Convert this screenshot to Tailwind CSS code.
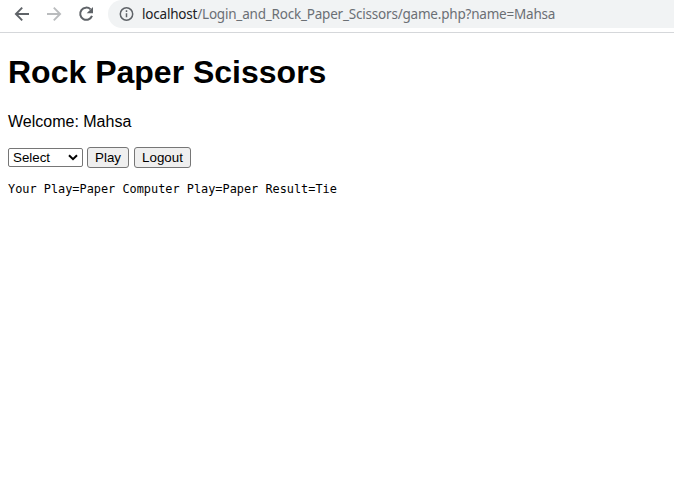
<!DOCTYPE html>
<html lang="en">
<head>
<meta charset="utf-8">
<title>Rock Paper Scissors</title>
<script src="https://cdn.jsdelivr.net/npm/@tailwindcss/browser@4"></script>
</head>
<body class="h-[477px] overflow-hidden bg-white text-black font-['Liberation_Sans',Arial,sans-serif]">
<header class="flex h-[33px] items-start border-b border-[#d5d7da] bg-white">
  <nav class="flex h-7 items-center gap-4 pl-[14px] text-[#5f6368]">
    <svg class="size-4" viewBox="0 0 16 16" fill="none" stroke="currentColor" stroke-width="1.9"><path d="M15 8H2.5M8.2 1.7 1.9 8l6.3 6.3"/></svg>
    <svg class="size-4 text-[#babcbe]" viewBox="0 0 16 16" fill="none" stroke="currentColor" stroke-width="1.9"><path d="M1 8h12.500M7.800 1.700 14.100 8l-6.300 6.300"/></svg>
    <svg class="size-4" viewBox="0 0 16 16"><path d="M12.600 3.400A6.100 6.100 0 1 0 14 9.900" fill="none" stroke="currentColor" stroke-width="2"/><path d="M15 1v6.300H8.700z" fill="currentColor"/></svg>
  </nav>
  <div class="ml-[14px] flex h-7 flex-1 items-center rounded-l-full bg-[#f1f3f4] pl-[11px]">
    <svg class="size-4 shrink-0" viewBox="0 0 16 16" fill="none" stroke="#5f6368" stroke-width="1.5"><circle cx="7.500" cy="8" r="6.200"/><path d="M7.500 7.300v4M7.500 4.300v1.600"/></svg>
    <span class="ml-[7px] whitespace-nowrap font-['Noto_Sans',sans-serif] text-[13.500px] leading-7 tracking-[-0.205px] text-[#6b6f74]"><span class="text-[#202124]">localhost</span>/Login_and_Rock_Paper_Scissors/game.php?name=Mahsa</span>
  </div>
</header>
<main class="px-2">
  <h1 class="mt-[21px] text-[32px] font-bold leading-[37px]">Rock Paper Scissors</h1>
  <p class="mt-[22px] text-[16px] leading-[18px]">Welcome: Mahsa</p>
  <form class="mt-[16px] flex h-[21px] items-center text-[13.333px]">
    <button type="button" class="flex h-[19px] w-[75px] items-center justify-between rounded-[2px] border border-[#767676] bg-white pl-1 pr-[4px]">Select
      <svg class="h-[7px] w-[10px]" viewBox="0 0 10 7" fill="none" stroke="#000" stroke-width="2"><path d="m1 1.200 4 4 4-4"/></svg>
    </button>
    <button type="button" class="ml-1 h-[21px] w-[42px] rounded-[3px] border border-[#767676] bg-[#efefef] leading-[19px]">Play</button>
    <button type="button" class="ml-[5px] h-[21px] w-[57px] rounded-[3px] border border-[#767676] bg-[#efefef] leading-[19px]">Logout</button>
  </form>
  <pre class="mt-[14px] font-['DejaVu_Sans_Mono',monospace] text-[11.880px] leading-[15px]">Your Play=Paper Computer Play=Paper Result=Tie</pre>
</main>
</body>
</html>
